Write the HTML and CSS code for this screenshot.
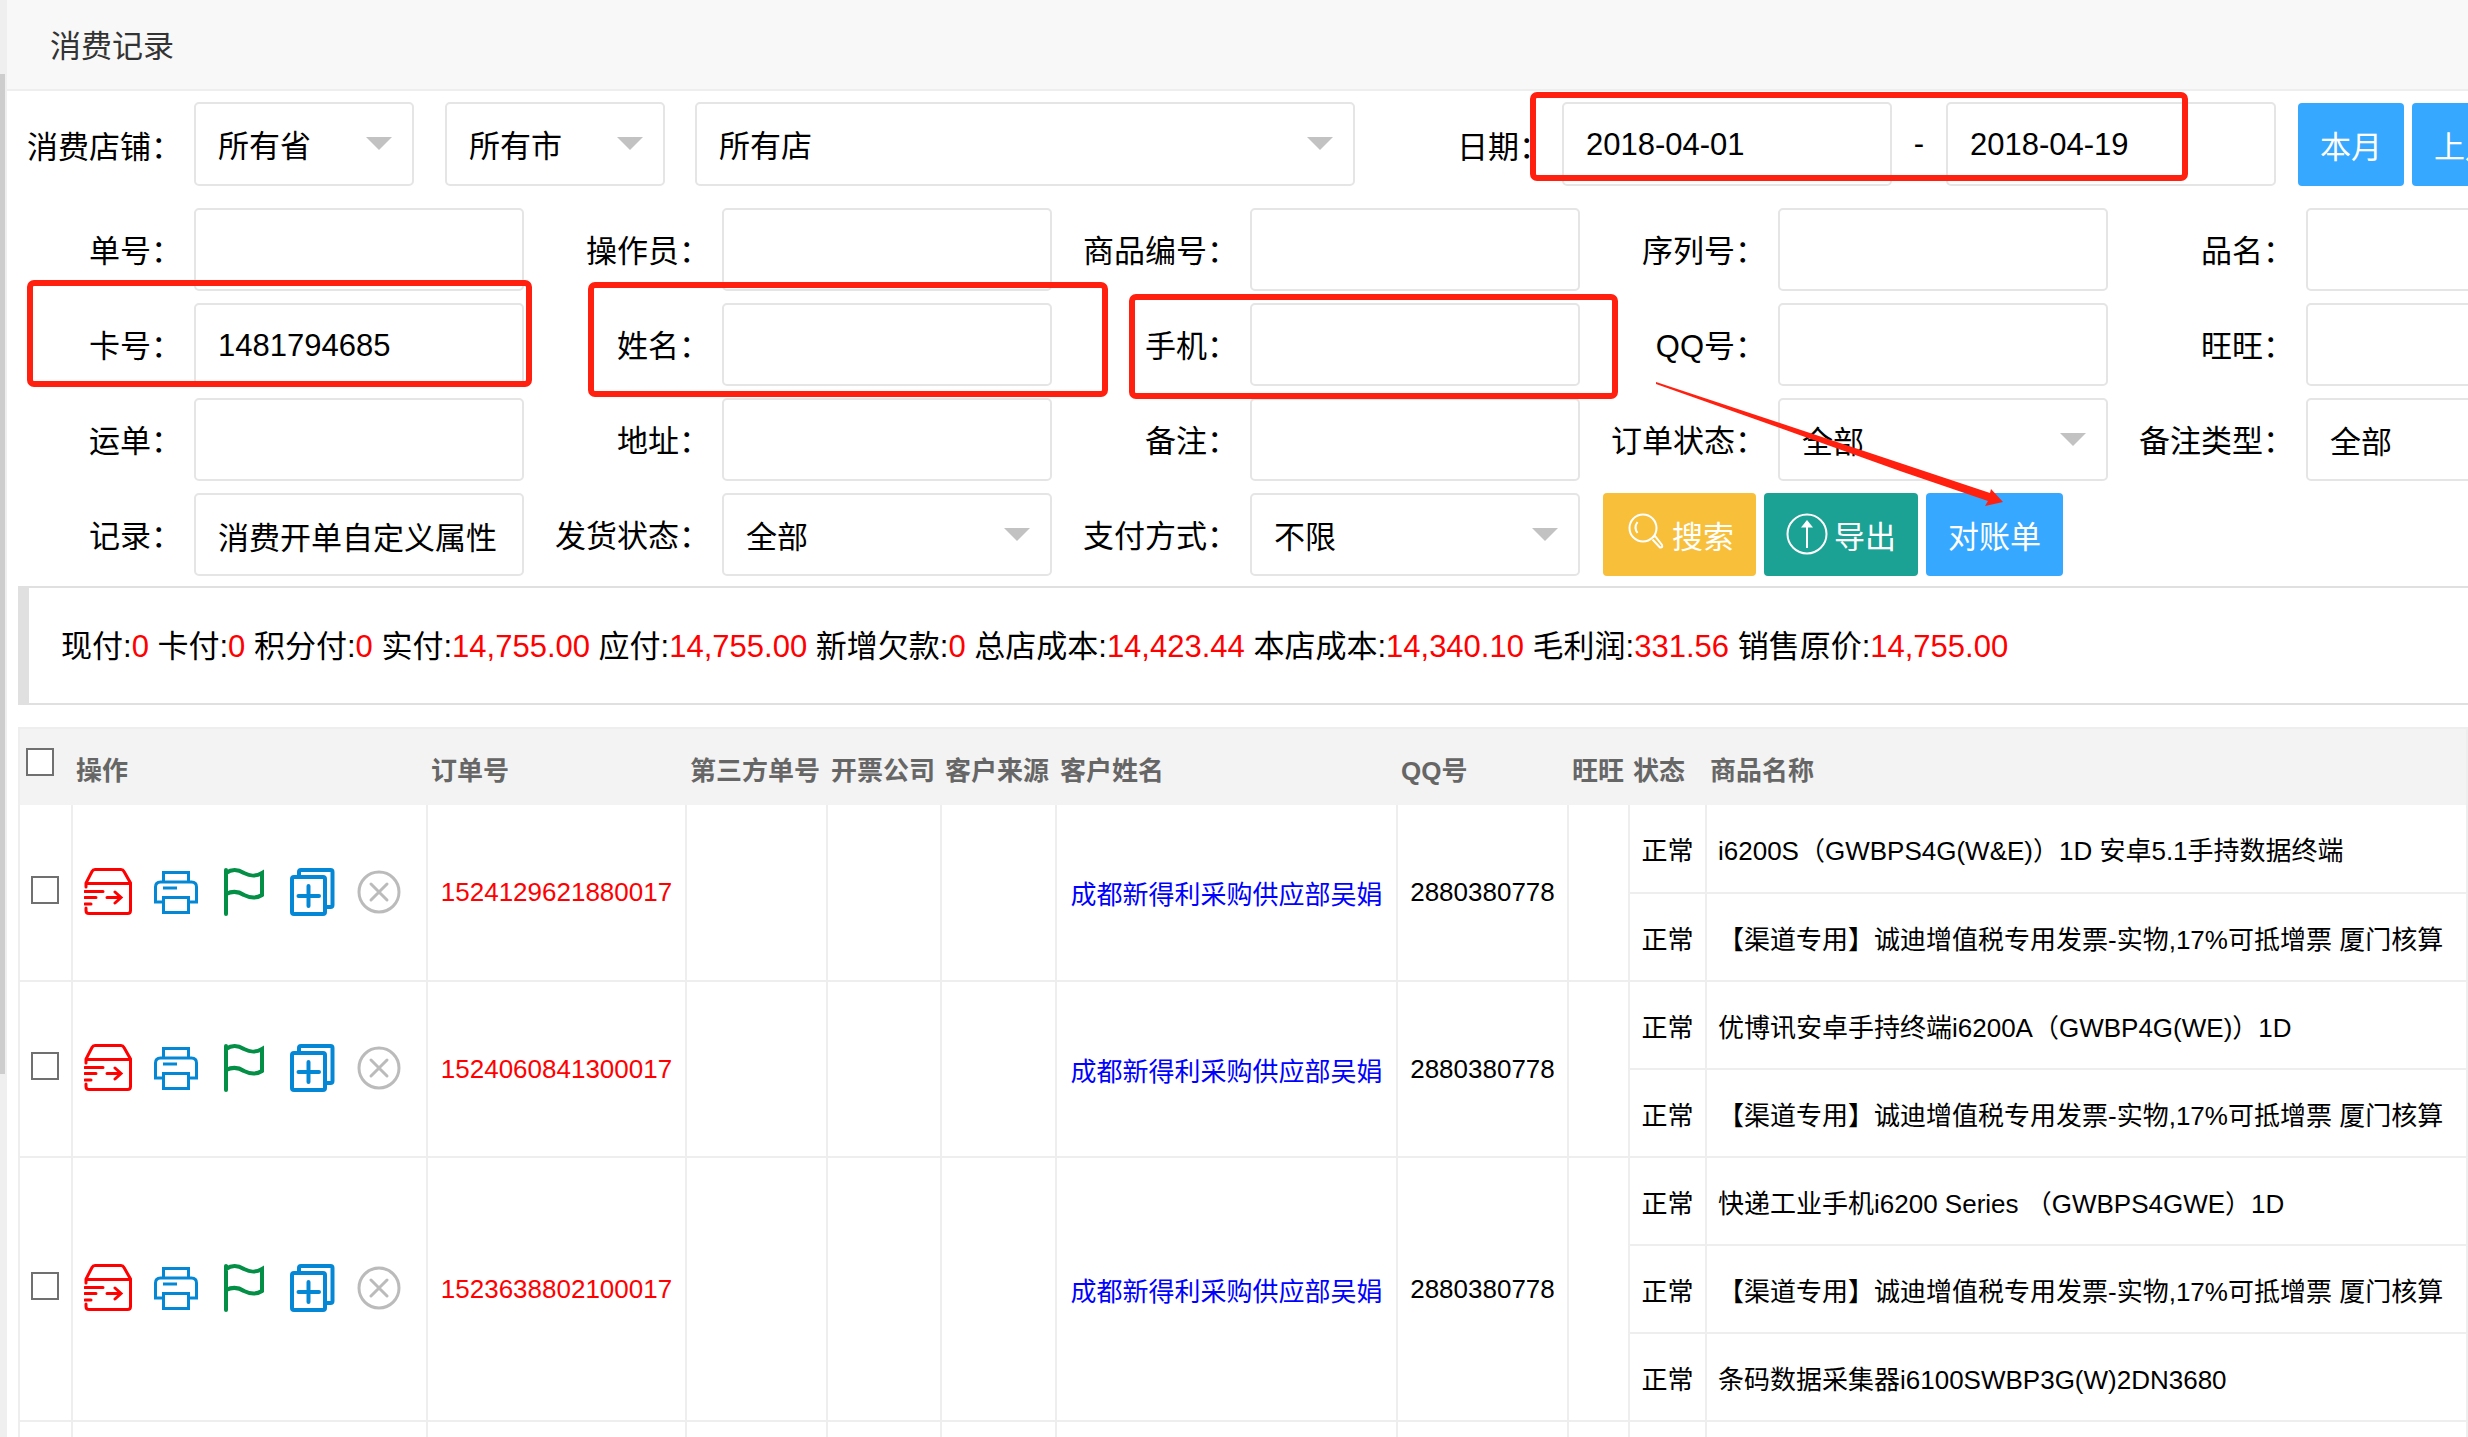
FILE: index.html
```html
<!DOCTYPE html>
<html lang="zh-CN">
  <head>
    <meta charset="UTF-8" />
    <meta name="viewport" content="width=device-width, initial-scale=1.0" />
    <title>消费记录</title>
    <link rel="stylesheet" href="styles.css">
  </head>
  <body>
    <!-- icons shared by every order row -->
    <svg class="sprite" aria-hidden="true">
      <symbol id="icon-ship" viewBox="0 0 48 48">
        <path d="M2 19v-4L8 3.500Q9 1.500 11 1.500h26q2 0 3 2L46.500 15v27.500q0 3-3 3H5q-3 0-3-3V40M2 15.500h44M1 23.500h18M1 29.500h11M1 36h6M23 29.500h13M31 24l6 5.500-6 5.500" />
      </symbol>
      <symbol id="icon-print" viewBox="0 0 48 48">
        <path d="M11.500 14V4.500h25V14M11 34H3.500V19q0-5 5-5h31q5 0 5 5v15H37M11.500 29.500h25v15h-25zM11 20h14" />
      </symbol>
      <symbol id="icon-flag" viewBox="0 0 48 48">
        <path d="M6 2v44M6 5c7-5 13-3 18 0 6 3 11 4 18 0v22c-6 4-12 3-18 0-6-4-12-4-18-1" />
      </symbol>
      <symbol id="icon-copy" viewBox="0 0 48 48">
        <path d="M11 9V4q0-2 2-2h29.500q2 0 2 2v33q0 2-2 2H38M6 9h29q2 0 2 2v33q0 2-2 2H6q-2 0-2-2V11q0-2 2-2zM20.500 18v20M10.500 28h20.500" />
      </symbol>
      <symbol id="icon-close" viewBox="0 0 48 48">
        <path d="M43 24a20 20 0 1 1-40 0a20 20 0 1 1 40 0M15 16l16 16M31 16L15 32" />
      </symbol>
    </svg>

    <div class="rail"><div class="thumb"></div></div>

    <main class="page">
      <h1 class="title">消费记录</h1>

      <form class="filters">
        <div class="row">
          <label for="province">消费店铺：</label>
          <span class="select province"><select id="province"><option>所有省</option></select></span>
          <span class="select city"><select aria-label="市"><option>所有市</option></select></span>
          <span class="select shop"><select aria-label="店"><option>所有店</option></select></span>
          <label class="date-label" for="from">日期：</label>
          <input class="date" id="from" type="text" value="2018-04-01" />
          <span class="dash">-</span>
          <input class="date" type="text" aria-label="结束日期" value="2018-04-19" />
          <div class="months">
            <button type="button" class="btn blue">本月</button>
            <button type="button" class="btn blue">上月</button>
          </div>
        </div>

        <div class="grid">
          <div class="field"><label for="f1">单号：</label><input id="f1" type="text" /></div>
          <div class="field"><label for="f2">操作员：</label><input id="f2" type="text" /></div>
          <div class="field"><label for="f3">商品编号：</label><input id="f3" type="text" /></div>
          <div class="field"><label for="f4">序列号：</label><input id="f4" type="text" /></div>
          <div class="field"><label for="f5">品名：</label><input id="f5" type="text" /></div>

          <div class="field"><label for="f6">卡号：</label><input id="f6" type="text" value="1481794685" /></div>
          <div class="field"><label for="f7">姓名：</label><input id="f7" type="text" /></div>
          <div class="field"><label for="f8">手机：</label><input id="f8" type="text" /></div>
          <div class="field"><label for="f9">QQ号：</label><input id="f9" type="text" /></div>
          <div class="field"><label for="f10">旺旺：</label><input id="f10" type="text" /></div>

          <div class="field"><label for="f11">运单：</label><input id="f11" type="text" /></div>
          <div class="field"><label for="f12">地址：</label><input id="f12" type="text" /></div>
          <div class="field"><label for="f13">备注：</label><input id="f13" type="text" /></div>
          <div class="field"><label for="f14">订单状态：</label><span class="select"><select id="f14"><option>全部</option></select></span></div>
          <div class="field"><label for="f15">备注类型：</label><span class="select"><select id="f15"><option>全部</option></select></span></div>

          <div class="field"><label for="f16">记录：</label><input id="f16" type="text" value="消费开单自定义属性" /></div>
          <div class="field"><label for="f17">发货状态：</label><span class="select"><select id="f17"><option>全部</option></select></span></div>
          <div class="field"><label for="f18">支付方式：</label><span class="select"><select id="f18"><option>不限</option></select></span></div>
          <div class="actions">
            <button type="button" class="btn yellow">
              <svg class="icon-search" viewBox="0 0 36 36"><circle cx="15" cy="15" r="13.500" /><path d="M9.500 20q-4-5.500 0-11M25 24l2-1 7 9q1 3-2 2.500l-7.500-8" /></svg>
              搜索
            </button>
            <button type="button" class="btn green">
              <svg class="icon-export" viewBox="0 0 42 42"><circle cx="21" cy="21" r="19.500" /><path d="M21 35V12" /><path class="solid" d="M15 14.500L21 7l6 7.500z" /></svg>
              导出
            </button>
            <button type="button" class="btn blue">对账单</button>
          </div>
        </div>
      </form>

      <div class="summary">
        现付:<b>0</b> 卡付:<b>0</b> 积分付:<b>0</b> 实付:<b>14,755.00</b> 应付:<b>14,755.00</b> 新增欠款:<b>0</b> 总店成本:<b>14,423.44</b> 本店成本:<b>14,340.10</b> 毛利润:<b>331.56</b> 销售原价:<b>14,755.00</b>
      </div>

      <table class="orders">
        <colgroup>
          <col class="c-check" /><col class="c-tools" /><col class="c-order" /><col class="c-third" />
          <col class="c-company" /><col class="c-source" /><col class="c-name" /><col class="c-qq" />
          <col class="c-ww" /><col class="c-state" /><col />
        </colgroup>
        <thead>
          <tr>
            <th><input type="checkbox" aria-label="全选" /></th>
            <th>操作</th>
            <th>订单号</th>
            <th>第三方单号</th>
            <th>开票公司</th>
            <th>客户来源</th>
            <th>客户姓名</th>
            <th>QQ号</th>
            <th>旺旺</th>
            <th>状态</th>
            <th>商品名称</th>
          </tr>
        </thead>
        <tbody>
          <tr>
            <td rowspan="2"><input type="checkbox" aria-label="选择" /></td>
            <td rowspan="2">
              <div class="tools">
                <button class="red" aria-label="发货"><svg><use href="#icon-ship" /></svg></button>
                <button class="print" aria-label="打印"><svg><use href="#icon-print" /></svg></button>
                <button class="flag" aria-label="标记"><svg><use href="#icon-flag" /></svg></button>
                <button class="copy" aria-label="复制"><svg><use href="#icon-copy" /></svg></button>
                <button class="close" aria-label="作废"><svg><use href="#icon-close" /></svg></button>
              </div>
            </td>
            <td rowspan="2" class="order-no">1524129621880017</td>
            <td rowspan="2"></td>
            <td rowspan="2"></td>
            <td rowspan="2"></td>
            <td rowspan="2"><a href="#">成都新得利采购供应部吴娟</a></td>
            <td rowspan="2">2880380778</td>
            <td rowspan="2"></td>
            <td>正常</td>
            <td class="goods">i6200S（GWBPS4G(W&amp;E)）1D 安卓5.1手持数据终端</td>
          </tr>
          <tr>
            <td>正常</td>
            <td class="goods">【渠道专用】诚迪增值税专用发票-实物,17%可抵增票 厦门核算</td>
          </tr>

          <tr>
            <td rowspan="2"><input type="checkbox" aria-label="选择" /></td>
            <td rowspan="2">
              <div class="tools">
                <button class="red" aria-label="发货"><svg><use href="#icon-ship" /></svg></button>
                <button class="print" aria-label="打印"><svg><use href="#icon-print" /></svg></button>
                <button class="flag" aria-label="标记"><svg><use href="#icon-flag" /></svg></button>
                <button class="copy" aria-label="复制"><svg><use href="#icon-copy" /></svg></button>
                <button class="close" aria-label="作废"><svg><use href="#icon-close" /></svg></button>
              </div>
            </td>
            <td rowspan="2" class="order-no">1524060841300017</td>
            <td rowspan="2"></td>
            <td rowspan="2"></td>
            <td rowspan="2"></td>
            <td rowspan="2"><a href="#">成都新得利采购供应部吴娟</a></td>
            <td rowspan="2">2880380778</td>
            <td rowspan="2"></td>
            <td>正常</td>
            <td class="goods">优博讯安卓手持终端i6200A（GWBP4G(WE)）1D</td>
          </tr>
          <tr>
            <td>正常</td>
            <td class="goods">【渠道专用】诚迪增值税专用发票-实物,17%可抵增票 厦门核算</td>
          </tr>

          <tr>
            <td rowspan="3"><input type="checkbox" aria-label="选择" /></td>
            <td rowspan="3">
              <div class="tools">
                <button class="red" aria-label="发货"><svg><use href="#icon-ship" /></svg></button>
                <button class="print" aria-label="打印"><svg><use href="#icon-print" /></svg></button>
                <button class="flag" aria-label="标记"><svg><use href="#icon-flag" /></svg></button>
                <button class="copy" aria-label="复制"><svg><use href="#icon-copy" /></svg></button>
                <button class="close" aria-label="作废"><svg><use href="#icon-close" /></svg></button>
              </div>
            </td>
            <td rowspan="3" class="order-no">1523638802100017</td>
            <td rowspan="3"></td>
            <td rowspan="3"></td>
            <td rowspan="3"></td>
            <td rowspan="3"><a href="#">成都新得利采购供应部吴娟</a></td>
            <td rowspan="3">2880380778</td>
            <td rowspan="3"></td>
            <td>正常</td>
            <td class="goods">快递工业手机i6200 Series （GWBPS4GWE）1D</td>
          </tr>
          <tr>
            <td>正常</td>
            <td class="goods">【渠道专用】诚迪增值税专用发票-实物,17%可抵增票 厦门核算</td>
          </tr>
          <tr>
            <td>正常</td>
            <td class="goods">条码数据采集器i6100SWBP3G(W)2DN3680</td>
          </tr>

          <tr>
            <td></td><td></td><td></td><td></td><td></td><td></td><td></td><td></td><td></td><td></td><td></td>
          </tr>
        </tbody>
      </table>
    </main>

    <!-- red marks drawn over the form -->
    <svg class="marks" aria-hidden="true">
      <rect x="30" y="283" width="499" height="101" rx="4" />
      <rect x="591" y="285" width="514" height="109" rx="4" />
      <rect x="1132" y="297" width="483" height="99" rx="4" />
      <rect x="1533" y="95" width="652" height="83" rx="4" />
      <path d="M1656 382L1780 423L1900 463L1990 493L1991 489L2003 502L1985 506L1988 501L1900 471L1780 428L1656 384Z" />
    </svg>
  </body>
</html>
```

FILE: styles.css
```css
*,
*::before,
*::after {
  box-sizing: border-box;
  padding: 0;
  margin: 0;
}

body {
  position: relative;
  display: flex;
  height: 100vh;
  overflow: hidden;
  background-color: #fff;
  color: #000;
  font-family: 'Liberation Sans', 'Noto Sans CJK SC', sans-serif;
  font-size: 31px;
}

input,
select,
button {
  font: inherit;
  color: inherit;
}

.sprite {
  position: absolute;
  width: 0;
  height: 0;
}

.rail {
  flex: none;
  width: 7px;
  padding-top: 74px;
  background-color: #efefef;
}

.thumb {
  width: 5px;
  height: 1000px;
  background-color: #cdcdcd;
}

.page {
  flex: 1;
  min-width: 0;
  overflow: hidden;
}

.title {
  height: 91px;
  padding: 2px 0 0 43px;
  border-bottom: 2px solid #eee;
  background-color: #f8f8f8;
  color: #333;
  font-size: 31px;
  font-weight: normal;
  line-height: 90px;
}

/* filters */
.filters {
  padding: 11px 0 10px 12px;
}

.row {
  display: flex;
  align-items: center;
  height: 84px;
  margin-bottom: 22px;
}

.row > * {
  flex: none;
}

label {
  width: 163px;
  margin-right: 12px;
  text-align: right;
  white-space: nowrap;
}

.filters input,
.filters select {
  display: block;
  width: 330px;
  height: 84px;
  padding: 2px 22px 0;
  border: 2px solid #e5e5e5;
  border-radius: 5px;
  background-color: #fff;
  outline: none;
}

.select {
  position: relative;
}

.filters select {
  width: 100%;
  padding-top: 5px;
  appearance: none;
}

.select::after {
  content: '';
  position: absolute;
  top: 35px;
  right: 22px;
  border: 13px solid transparent;
  border-top-color: #c2c2c2;
  border-bottom: 0;
}

.province {
  width: 220px;
}

.city {
  width: 220px;
  margin: 0 30px 0 31px;
}

.shop {
  width: 660px;
}

.row .date-label {
  width: 195px;
}

.dash {
  width: 54px;
  text-align: center;
}

.months {
  display: flex;
  gap: 8px;
  margin-left: 22px;
}

.grid {
  display: grid;
  grid-template-columns: repeat(5, 505px);
  gap: 12px 23px;
}

.field {
  display: flex;
  align-items: center;
}

.field label {
  padding-bottom: 2px;
}

.grid .select {
  width: 330px;
}

.grid input,
.grid select {
  height: 83px;
}

.actions {
  display: flex;
  gap: 8px;
}

.btn {
  display: flex;
  flex: none;
  align-items: center;
  height: 83px;
  padding: 0 22px;
  border: 0;
  border-radius: 4px;
  color: #fff;
  white-space: nowrap;
  cursor: pointer;
}

.btn svg {
  fill: none;
  stroke: #fff;
  stroke-width: 2;
}

.blue {
  background-color: #37a8ff;
}

.yellow {
  background-color: #f8bf3b;
}

.green {
  background-color: #1ca294;
}

.icon-search {
  width: 36px;
  height: 36px;
  margin: 0 8px 8px 3px;
}

.icon-export {
  width: 42px;
  height: 42px;
  margin: 0 6px 2px 0;
}

.btn .solid {
  fill: #fff;
  stroke: none;
}

/* totals */
.summary {
  height: 119px;
  margin: 0 0 22px 11px;
  padding-left: 32px;
  border: 2px solid #e0e0e0;
  border-width: 2px 0 2px 11px;
  line-height: 118px;
  white-space: nowrap;
}

.summary b {
  color: #f00;
  font-weight: normal;
}

/* orders */
.orders {
  width: calc(100% - 11px);
  margin-left: 11px;
  border-collapse: collapse;
  table-layout: fixed;
  font-size: 26px;
}

.c-check { width: 53px; }
.c-tools { width: 355px; }
.c-order { width: 259px; }
.c-third { width: 141px; }
.c-company { width: 114px; }
.c-source { width: 115px; }
.c-name { width: 341px; }
.c-qq { width: 171px; }
.c-ww { width: 61px; }
.c-state { width: 77px; }

th {
  height: 77px;
  padding: 2px 0 0 4px;
  background-color: #f3f3f3;
  color: #666;
  text-align: left;
  white-space: nowrap;
}

thead {
  border: 2px solid #eee;
  border-bottom: 0;
}

td {
  height: 88px;
  border: 2px solid #eee;
  text-align: center;
  white-space: nowrap;
}

tbody tr:first-child td {
  border-top: 0;
}

td.goods {
  padding-left: 11px;
  text-align: left;
}

.orders input {
  display: block;
  width: 28px;
  height: 28px;
  border: 2px solid #707070;
  background-color: #fff;
  appearance: none;
}

th input {
  margin: 0 0 12px 2px;
}

td input {
  margin: 0 0 6px 11px;
}

.order-no {
  color: #f00;
}

a {
  color: #00f;
  text-decoration: none;
}

.tools {
  display: flex;
  gap: 20px;
  padding: 0 0 2px 11px;
}

.tools button {
  width: 48px;
  height: 48px;
  border: 0;
  background: none;
  cursor: pointer;
}

.tools svg {
  display: block;
  width: 48px;
  height: 48px;
  fill: none;
  stroke: currentColor;
  stroke-width: 3;
  stroke-linecap: round;
}

.tools .red {
  color: #f00;
}

.tools .print,
.tools .copy {
  color: #0487d4;
}

.tools .print svg {
  stroke-linecap: butt;
}

.tools .flag {
  color: #048f46;
}

.tools .flag svg,
.tools .copy svg {
  stroke-width: 4;
}

.tools .close {
  color: #bbb;
}

/* red marks */
.marks {
  position: absolute;
  top: 0;
  left: 0;
  width: 100%;
  height: 100%;
  pointer-events: none;
}

.marks rect {
  fill: none;
  stroke: #ff2010;
  stroke-width: 6;
}

.marks path {
  fill: #ff2010;
}
```
